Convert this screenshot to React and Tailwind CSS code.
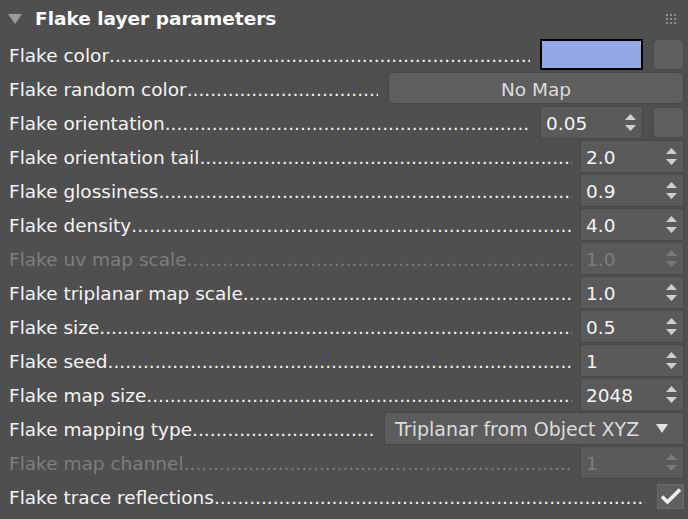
import React from "react";

const DOTS = ".".repeat(200);

function Up({ color = "#c9c9c9" }) {
  return (
    <svg width="11" height="6" viewBox="0 0 11 6"><polygon points="0,6 11,6 5.5,0" fill={color} /></svg>
  );
}
function Down({ color = "#c9c9c9" }) {
  return (
    <svg width="11" height="6" viewBox="0 0 11 6"><polygon points="0,0 11,0 5.5,6" fill={color} /></svg>
  );
}

function Spinner({ value, disabled, w = "w-[104px]" }) {
  return (
    <div className={`${w} h-[33px] shrink-0 flex items-center justify-between border border-[#474747] bg-[#5a5a5a] pl-[5px] pr-[6px] ${disabled ? "text-[#7e7e7e]" : "text-[#f4f4f4]"}`}>
      <span className="pt-[3px]">{value}</span>
      <div className="flex flex-col gap-[5px]">
        <Up color={disabled ? "#7a7a7a" : "#cfcfcf"} />
        <Down color={disabled ? "#7a7a7a" : "#cfcfcf"} />
      </div>
    </div>
  );
}

function SquareBtn() {
  return <div className="w-[31px] h-[31px] shrink-0 rounded-[5px] bg-[#5f5f5f] border border-[#4a4a4a] ml-[10px]" />;
}

function Row({ label, disabled, children, gap = "ml-[8px]" }) {
  const c = disabled ? "text-[#7e7e7e]" : "text-[#f4f4f4]";
  return (
    <div className="h-[34px] flex items-center pl-[9px] pr-[4px]">
      <span className={`whitespace-nowrap pt-[3px] ${c}`}>{label}</span>
      <span className={`flex-1 min-w-0 overflow-hidden whitespace-nowrap pt-[3px] ${c}`}>{DOTS}</span>
      <div className={`flex items-center shrink-0 ${gap}`}>{children}</div>
    </div>
  );
}

export default function App() {
  return (
    <div className="w-[688px] h-[519px] bg-[#4f4f4f] overflow-hidden font-['DejaVu_Sans','Verdana',sans-serif] text-[18.5px]">
      <div className="h-[37px] flex items-center pl-[8px] pr-[12px]">
        <svg width="14" height="10" viewBox="0 0 14 10" className="mr-[13px]"><polygon points="0,0 14,0 7,10" fill="#9a9a9a" /></svg>
        <span className="font-bold text-white">Flake layer parameters</span>
        <div className="ml-auto grid grid-cols-3 gap-[2px]">
          {Array.from({ length: 9 }).map((_, i) => (
            <div key={i} className="w-[2px] h-[2px] bg-[#8c8c8c]" />
          ))}
        </div>
      </div>

      <Row label="Flake color" gap="ml-[10px]">
        <div className="w-[103px] h-[31px] border-2 border-black bg-[#95a8e6]" />
        <SquareBtn />
      </Row>
      <Row label="Flake random color" gap="ml-[10px]">
        <div className="w-[296px] h-[32px] rounded-[5px] bg-[#5e5e5e] border border-[#474747] flex items-center justify-center text-[#dcdcdc]"><span className="pt-[3px]">No Map</span></div>
      </Row>
      <Row label="Flake orientation" gap="ml-[10px]">
        <Spinner value="0.05" w="w-[103px]" />
        <SquareBtn />
      </Row>
      <Row label="Flake orientation tail"><Spinner value="2.0" /></Row>
      <Row label="Flake glossiness"><Spinner value="0.9" /></Row>
      <Row label="Flake density"><Spinner value="4.0" /></Row>
      <Row label="Flake uv map scale" disabled><Spinner value="1.0" disabled /></Row>
      <Row label="Flake triplanar map scale"><Spinner value="1.0" /></Row>
      <Row label="Flake size"><Spinner value="0.5" /></Row>
      <Row label="Flake seed"><Spinner value="1" /></Row>
      <Row label="Flake map size"><Spinner value="2048" /></Row>
      <Row label="Flake mapping type" gap="ml-[10px]">
        <div className="w-[300px] h-[33px] bg-[#5c5c5c] border border-[#464646] flex items-center justify-between pl-[10px] pr-[15px] text-[#dcdcdc] text-[19px]">
          <span className="pt-[3px]">Triplanar from Object XYZ</span>
          <svg width="12" height="9" viewBox="0 0 12 9"><polygon points="0,0 12,0 6,9" fill="#e2e2e2" /></svg>
        </div>
      </Row>
      <Row label="Flake map channel" disabled><Spinner value="1" disabled /></Row>
      <Row label="Flake trace reflections" gap="ml-[12px]">
        <div className="w-[27px] h-[25px] bg-[#5f5f5f] border border-[#6a6a6a] flex items-center justify-center">
          <svg width="22" height="18" viewBox="0 0 22 18"><path d="M2 9.5 L7.5 15 L20 2.5" stroke="#ededed" strokeWidth="3.6" fill="none" strokeLinejoin="miter" /></svg>
        </div>
      </Row>
    </div>
  );
}
